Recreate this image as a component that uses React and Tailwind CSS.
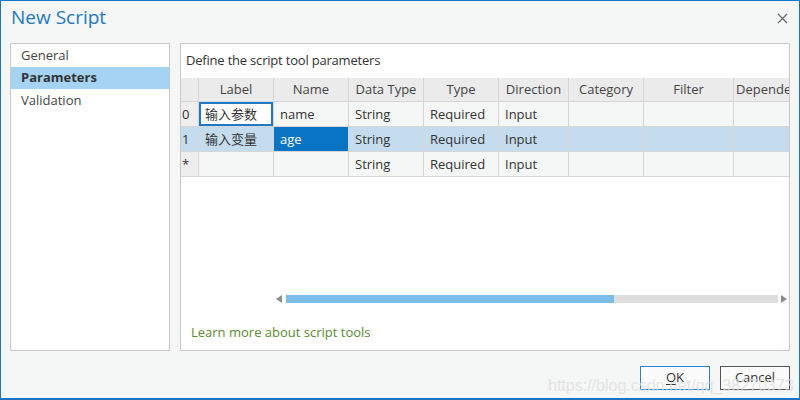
const font = { fontFamily: '"Open Sans", "Noto Sans CJK SC", sans-serif' };

const columns = [
  { name: 'Label', w: 'w-[75px]' },
  { name: 'Name', w: 'w-[75px]' },
  { name: 'Data Type', w: 'w-[75px]' },
  { name: 'Type', w: 'w-[75px]' },
  { name: 'Direction', w: 'w-[70px]' },
  { name: 'Category', w: 'w-[75px]' },
  { name: 'Filter', w: 'w-[90px]' },
  { name: 'Dependency', w: 'w-[80px]' },
];

const rows = [
  { id: '0', cells: ['输入参数', 'name', 'String', 'Required', 'Input', '', '', ''] },
  { id: '1', cells: ['输入变量', 'age', 'String', 'Required', 'Input', '', '', ''], selected: true },
  { id: '*', cells: ['', '', 'String', 'Required', 'Input', '', '', ''] },
];

function Cell({ col, text, rowSelected, colIndex, rowIndex }) {
  let cls = 'bg-[#f5f6f6] text-[#333]';
  if (rowSelected) cls = 'bg-[#c5dcef] text-[#333]';
  if (rowSelected && colIndex === 1) cls = 'bg-[#0a74c4] text-white';
  const focused = rowIndex === 0 && colIndex === 0;
  return (
    <div className={`${col.w} shrink-0 h-full border-r border-[#d6d6d6] relative flex items-center pl-[6px] pt-[1px] text-[13px] ${cls}`}>
      {focused && <div className="absolute inset-0 bg-white border-2 border-[#1f78c8]" />}
      <span className="relative">{text}</span>
    </div>
  );
}

export default function App() {
  return (
    <div style={font} className="w-[800px] h-[400px] bg-[#f5f6f6] border border-b-2 border-[#1a74c4] flex flex-col relative overflow-hidden">
      <div className="h-[42px] shrink-0 flex items-start justify-between pl-[10px] pr-[10px]">
        <div className="text-[19px] leading-[28px] text-[#2479c2] mt-[2px]">New Script</div>
        <svg width="11" height="11" viewBox="0 0 11 11" className="mt-[12px] mr-[1px]">
          <path d="M1 1 L10 10 M10 1 L1 10" stroke="#6b6b6b" strokeWidth="1.3" />
        </svg>
      </div>

      <div className="flex gap-[10px] px-[9px] h-[308px] shrink-0">
        <div className="w-[160px] shrink-0 bg-white border border-[#c9c9c9] flex flex-col pt-[1px] text-[13px] text-[#444]">
          <div className="h-[22px] flex items-center pl-[10px]">General</div>
          <div className="h-[22px] flex items-center pl-[10px] bg-[#a4d3f3] font-bold text-[#333]">Parameters</div>
          <div className="h-[23px] flex items-center pl-[10px]">Validation</div>
        </div>

        <div className="flex-1 bg-white border border-[#c9c9c9] flex flex-col overflow-hidden">
          <div className="h-[34px] shrink-0 flex items-center pl-[5px] text-[13px] text-[#333] tracking-[-0.2px]">
            Define the script tool parameters
          </div>

          <div className="flex flex-col">
            <div className="flex h-[24px] bg-[#ebebeb] border-b border-[#d6d6d6]">
              <div className="w-[18px] shrink-0 h-full border-r border-[#d6d6d6]" />
              {columns.map((c) => (
                <div
                  key={c.name}
                  className={`${c.w} shrink-0 h-full border-r border-[#d6d6d6] flex items-center justify-center text-[13px] text-[#444] whitespace-nowrap overflow-hidden`}
                >
                  {c.name === 'Dependency' ? <span className="pl-[2px] w-full">Dependency</span> : c.name}
                </div>
              ))}
            </div>
            {rows.map((r, ri) => (
              <div key={r.id} className="flex h-[25px] border-b border-[#d6d6d6]">
                <div className={`w-[18px] shrink-0 h-full border-r border-[#d6d6d6] flex items-center pl-[1px] pt-[1px] text-[13px] text-[#333] ${r.selected ? 'bg-[#c5dcef]' : 'bg-[#eeeeee]'}`}>
                  {r.id}
                </div>
                {columns.map((c, ci) => (
                  <Cell key={c.name} col={c} text={r.cells[ci]} rowSelected={r.selected} colIndex={ci} rowIndex={ri} />
                ))}
              </div>
            ))}
          </div>

          <div className="flex-1" />

          <div className="flex items-center h-[8px] ml-[95px] mb-[18px]">
            <div className="w-0 h-0 border-y-[4px] border-y-transparent border-r-[6px] border-r-[#8c8c8c]" />
            <div className="w-[4px]" />
            <div className="w-[328px] h-[8px] bg-[#7bbce8]" />
            <div className="w-[164px] h-[8px] bg-[#dedede]" />
            <div className="w-[3px]" />
            <div className="w-0 h-0 border-y-[4px] border-y-transparent border-l-[6px] border-l-[#8c8c8c]" />
          </div>

          <div className="h-[29px] shrink-0 pl-[10px] pt-[2px] text-[13px] text-[#5b8a33]">Learn more about script tools</div>
        </div>
      </div>

      <div className="flex justify-end gap-[10px] pr-[9px] pt-[15px]">
        <button className="w-[70px] h-[24px] bg-[#fbfbfb] border border-[#2a80d6] text-[13px] text-[#333]">
          <span className="underline underline-offset-2">O</span>K
        </button>
        <button className="w-[70px] h-[24px] bg-[#fbfbfb] border border-[#555] text-[13px] text-[#333]">Cancel</button>
      </div>

      <div
        className="absolute left-[547px] top-[373px] text-[16px] text-[#dcdcdc] opacity-70 pointer-events-none whitespace-nowrap"
        style={{ fontFamily: '"Liberation Sans", sans-serif' }}
      >
        https://blog.csdn.net/qq_38270373
      </div>
    </div>
  );
}
